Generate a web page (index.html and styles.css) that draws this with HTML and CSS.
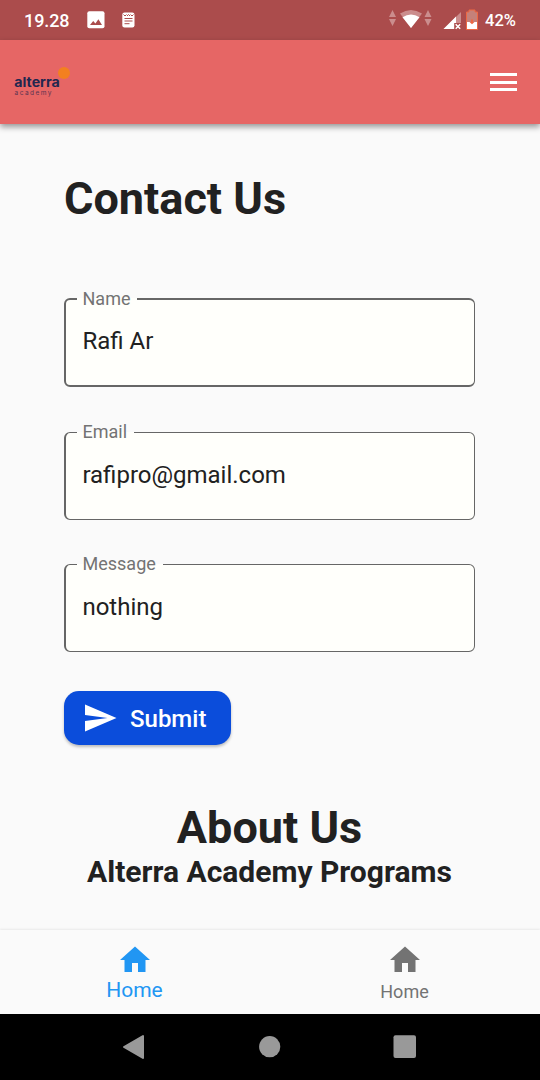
FILE: index.html
```html
<!DOCTYPE html>
<html lang="en">
<head>
<meta charset="utf-8">
<title>Contact Us</title>
<link rel="stylesheet" href="styles.css">
</head>
<body>
<div class="status">
  <span class="clock">19.28</span>
  <svg class="picture" width="18" height="18" viewBox="0 0 18 18"><rect x=".3" y=".3" width="17.2" height="17" rx="2" fill="#fff"/><path d="M3 14l3.200-4 2.200 2.600 3-4.300L15 14z" fill="#ab4c4c"/></svg>
  <svg class="note" width="13" height="16" viewBox="0 0 13 16"><rect x=".3" y=".5" width="12.200" height="15" rx="2.200" fill="#fff"/><path d="M1.500 2.500l1.500 1.500 1.500-1.500M5 4l1.500-1.500L8 4M8.500 2.500L10 4l1.500-1.500M2.500 6.500h8M2.500 9h8M2.500 11.700h5" fill="none" stroke="#ab4c4c"/></svg>
  <span class="grow"></span>
  <svg class="signals" width="92" height="24" viewBox="388 8 92 24">
    <g fill="#cb8d8d"><path d="M392.500 10l3.500 7h-7zM392.500 26l3.500-7h-7zM428 10l3.500 7h-7zM428 26l3.500-7h-7z"/>
    <path d="M400 13.500Q411 6.500 422 13.500L411 28z"/></g>
    <path d="M402.500 17.200Q411 12 419.500 17.200L411 28z" fill="#fff"/>
    <path d="M443.500 29L461 12v17z" fill="#cb8d8d"/>
    <path d="M443.500 29L456 16.500V23h-2v6z" fill="#fff"/>
    <path d="M454.500 23h6.500v6h-6.500z" fill="#ab4c4c"/>
    <path d="M455.700 24.200l4.500 4.500m0-4.500l-4.500 4.500" stroke="#fff" stroke-width="1.500"/>
    <path d="M469 10h6v2h2.500v17.500h-11V12h2.500z" fill="#c58179" stroke="#ed6843" stroke-width="1"/>
    <path d="M467 22h10v7h-10z" fill="#fff"/>
    <path d="M471 19.500h2V22h1.500L472 24.200 469.500 22h1.500z" fill="#ed6843"/>
  </svg>
  <span class="percent">42%</span>
</div>
<header class="appbar">
  <svg class="logo" width="60" height="32" viewBox="12 66 60 32">
    <circle cx="64" cy="73" r="6" fill="#f3801f"/>
    <text class="brand" x="14.300" y="87" textLength="45.500" lengthAdjust="spacingAndGlyphs">alterra</text>
    <text class="brand-sub" x="14.500" y="95" textLength="37" lengthAdjust="spacing">academy</text>
  </svg>
  <svg class="menu" width="28" height="20" viewBox="0 0 28 20"><path d="M0 1h27v3H0zM0 9h27v3H0zM0 16h27v3H0z" fill="#fff"/></svg>
</header>
<main class="content">
  <h1 class="title">Contact Us</h1>
  <fieldset class="field first"><legend>Name</legend><span>Rafi Ar</span></fieldset>
  <fieldset class="field email"><legend>Email</legend><span>rafipro@gmail.com</span></fieldset>
  <fieldset class="field"><legend>Message</legend><span>nothing</span></fieldset>
  <button class="submit"><svg width="36" height="36" viewBox="0 0 24 24"><path d="M2.010 21L23 12 2.010 3 2 10l15 2-15 2z" fill="#fff"/></svg><span>Submit</span></button>
  <h2 class="about">About Us</h2>
  <h3 class="programs">Alterra Academy Programs</h3>
</main>
<nav class="tabs">
  <div class="tab active"><svg width="36" height="36" viewBox="0 0 24 24"><path d="M10 20v-6h4v6h5v-8h3L12 3 2 12h3v8z" fill="currentColor"/></svg><span>Home</span></div>
  <div class="tab"><svg width="36" height="36" viewBox="0 0 24 24"><path d="M10 20v-6h4v6h5v-8h3L12 3 2 12h3v8z" fill="currentColor"/></svg><span>Home</span></div>
</nav>
<div class="system">
  <svg width="24" height="26" viewBox="0 0 24 26"><path d="M2 13L21 2v22z" fill="#999" stroke="#999" stroke-width="2" stroke-linejoin="round"/></svg>
  <svg width="24" height="24" viewBox="0 0 24 24"><circle cx="11.700" cy="11.700" r="10.600" fill="#999"/></svg>
  <svg width="24" height="24" viewBox="0 0 24 24"><rect x=".5" y=".3" width="22.500" height="22.700" rx="2" fill="#999"/></svg>
</div>
</body>
</html>
```
FILE: styles.css
```css
* { box-sizing: border-box; }
body {
  margin: 0; width: 540px; height: 1080px; overflow: hidden;
  display: flex; flex-direction: column;
  background: #fafafa; color: #212121;
  font-family: Roboto, "Noto Sans", sans-serif;
}
svg { display: block; flex: none; }
.status {
  height: 40px; flex: none; padding: 0 23px 0 24px;
  display: flex; align-items: center;
  background: #ab4c4c; color: #fff; font-weight: 500;
}
.clock { width: 63px; font-size: 18px; letter-spacing: -.1px; padding-top: 1px; }
.note { margin-left: 17px; }
.grow { flex: 1; }
.percent { width: 32px; margin-left: 5px; font-size: 16.500px; padding-top: 1px; white-space: nowrap; }
.appbar {
  height: 84px; flex: none; padding: 0 22px 0 12px;
  display: flex; align-items: center; justify-content: space-between;
  background: #e66665; box-shadow: 0 3px 6px rgba(0, 0, 0, .4);
}
.brand { font: 700 13px Inter, sans-serif; fill: #22264f; }
.brand-sub { font: 400 6.500px Inter, sans-serif; fill: #5a3451; }
.content { flex: 1; padding: 48px 65px 0 64px; }
h1, h2, h3 { margin: 0; font-weight: 700; }
.title { font-size: 45px; line-height: 53px; margin-bottom: 65px; }
.field {
  margin: 0 0 36px; padding: 0 16px; height: 97px;
  border: 1px solid #666; border-left-width: 2px; border-radius: 6px;
  background: #fffffb;
}
.field.first { border-top-width: 2px; border-bottom-width: 2px; }
.field.email { margin-bottom: 35px; }
.field legend {
  margin-left: -5px; padding: 0 7px 0 5.500px;
  font-size: 18px; line-height: 18px; color: #737373;
}
.field span { display: block; padding: 20px 0 0 .4px; font-size: 24px; line-height: 28px; }
.field.first span { padding-top: 19px; }
.submit {
  width: 167px; height: 54px; margin-top: 39px; padding: 0 0 0 18px;
  display: flex; align-items: center; gap: 12px;
  border: 0; border-radius: 15px; background: #0b4ddb; color: #fff;
  font: 500 24px Roboto, sans-serif;
  box-shadow: 0 2px 3px rgba(0, 0, 0, .25);
}
.submit span { padding-top: 2px; }
.about { margin-top: 56px; font-size: 45px; line-height: 53px; text-align: center; }
.programs { font-size: 30px; line-height: 36px; text-align: center; white-space: nowrap; }
.tabs {
  height: 84px; flex: none; display: flex;
  background: #fafafa; box-shadow: 0 -1px 2px rgba(0, 0, 0, .07);
}
.tab {
  flex: 1; padding: 12px 1px 0 0; display: flex; flex-direction: column; align-items: center;
  color: #737373; font-size: 18px; line-height: 28px;
}
.tab.active { color: #2196f3; font-size: 21px; line-height: 24px; }
.system {
  height: 66px; flex: none; padding: 0 123px 0 122px;
  display: flex; align-items: center; justify-content: space-between;
  background: #000;
}
```
